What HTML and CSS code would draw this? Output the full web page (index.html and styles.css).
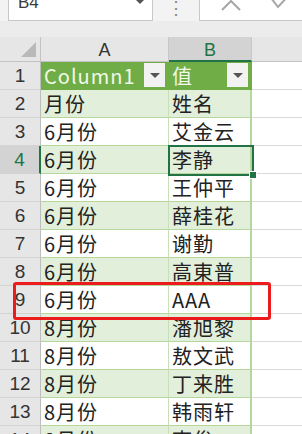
FILE: index.html
```html
<!DOCTYPE html>
<html lang="zh-CN">
<head>
    <meta charset="UTF-8">
    <title>Sheet</title>
    <link rel="stylesheet" href="styles.css">
</head>
<body>
    <!-- Name box and formula bar -->
    <div class="topbar">
        <div class="namebox">
            <span class="ref">B4</span>
            <svg class="drop" width="10" height="6" viewBox="0 0 10 6"><path d="M1 0 L5 4 L9 0" fill="#555"/></svg>
        </div>
        <div class="dots">⋮</div>
        <div class="formula">
            <svg class="fx-icon" width="22" height="12" viewBox="0 0 22 12"><path d="M2 10 L11 1 L20 10" stroke="#a6a6a6" stroke-width="2" fill="none"/></svg>
            <svg class="fx-icon" width="24" height="12" viewBox="0 0 24 12"><path d="M3 -2 L10 7 L22 -6" stroke="#a6a6a6" stroke-width="2" fill="none"/></svg>
        </div>
    </div>
    <div class="gap"></div>

    <!-- Grid -->
    <div class="sheet" id="sheet">
        <div class="corner"><span class="tri"></span></div>
        <div class="colhead">A</div>
        <div class="colhead sel">B</div>
        <div class="colhead last"></div>
    </div>

    <!-- overlays -->
    <div class="cursor"><span class="handle"></span></div>
    <div class="redbox"></div>

    <script>
        const rows = [
            ['月份', '姓名'],
            ['6月份', '艾金云'],
            ['6月份', '李静'],
            ['6月份', '王仲平'],
            ['6月份', '薛桂花'],
            ['6月份', '谢勤'],
            ['6月份', '高東普'],
            ['6月份', 'AAA'],
            ['8月份', '潘旭黎'],
            ['8月份', '敖文武'],
            ['8月份', '丁来胜'],
            ['8月份', '韩雨轩'],
            ['8月份', '李俊']
        ];
        const sheet = document.getElementById('sheet');
        let html = `
            <div class="rh">1</div>
            <div class="th">Column1<span class="filter"></span></div>
            <div class="th">值<span class="filter"></span></div>
            <div class="e"></div>`;
        rows.forEach((r, i) => {
            const n = i + 2;
            const band = n % 2 === 0 ? ' band' : '';
            html += `
                <div class="rh${n === 4 ? ' sel' : ''}">${n}</div>
                <div class="c${band}">${r[0]}</div>
                <div class="c b${band}">${r[1]}</div>
                <div class="e"></div>`;
        });
        sheet.insertAdjacentHTML('beforeend', html);
    </script>
</body>
</html>
```

FILE: styles.css
```css
/* Sheet view */
body {
    margin: 0;
    padding: 0;
    width: 302px;
    height: 434px;
    overflow: hidden;
    background-color: #f3f3f3;
    font-family: "Noto Sans CJK SC", "Liberation Sans", sans-serif;
    color: #222;
    position: relative;
}
.topbar {
    display: flex;
    height: 21px;
    background-color: #f3f3f3;
}
.namebox {
    width: 143px;
    margin-left: 8px;
    background-color: white;
    border: 1px solid #c8c8c8;
    border-top: none;
    display: flex;
    justify-content: space-between;
    overflow: hidden;
}
.ref {
    font-family: "Liberation Sans", sans-serif;
    font-size: 17px;
    color: #3a3a3a;
    margin-left: 9px;
    margin-top: -7px;
    line-height: 20px;
}
.drop {
    margin: 0 7px 0 0;
}
.dots {
    width: 46px;
    text-align: center;
    color: #8a8a8a;
    font-size: 18px;
    line-height: 14px;
    margin-top: -1px;
}
.formula {
    flex: 1;
    background-color: white;
    border: 1px solid #c8c8c8;
    border-top: none;
    border-right: none;
    display: flex;
    gap: 26px;
    padding-left: 20px;
    overflow: hidden;
}
.gap {
    height: 16px;
    background-color: #ececec;
}
.sheet {
    display: grid;
    grid-template-columns: 41px 128px 83px 1fr;
    grid-template-rows: 25px repeat(14, 28px);
    background-color: white;
    font-size: 20px;
    letter-spacing: 1px;
}
.corner {
    background-color: #e6e6e6;
    border-right: 1px solid #c3c3c3;
    border-bottom: 1px solid #c3c3c3;
    position: relative;
}
.tri {
    position: absolute;
    right: 4px;
    bottom: 4px;
    width: 0;
    height: 0;
    border-left: 15px solid transparent;
    border-bottom: 15px solid #b9b9b9;
}
.colhead {
    background-color: #e6e6e6;
    border-right: 1px solid #c8c8c8;
    border-bottom: 1px solid #c3c3c3;
    text-align: center;
    font-family: "Liberation Sans", sans-serif;
    font-size: 18px;
    line-height: 26px;
    color: #333;
    letter-spacing: 0;
}
.colhead.sel {
    background-color: #d3d3d3;
    border-bottom: 2px solid #217346;
    color: #217346;
}
.colhead.last {
    border-right: none;
}
.rh {
    background-color: #e6e6e6;
    border-right: 1px solid #bdbdbd;
    border-bottom: 1px solid #d3d3d3;
    text-align: center;
    font-family: "Liberation Sans", sans-serif;
    font-size: 19px;
    line-height: 28px;
    color: #333;
    letter-spacing: 0;
}
.rh.sel {
    background-color: #d3d3d3;
    border-right: 2px solid #217346;
    color: #217346;
}
.th {
    background-color: #70ad47;
    color: #f1f8e9;
    border-right: 1px solid #70ad47;
    padding-left: 3px;
    line-height: 27px;
    position: relative;
}
.filter {
    position: absolute;
    right: 3px;
    top: 1px;
    width: 21px;
    height: 24px;
    background-color: #f2f2f2;
}
.filter::after {
    content: "";
    position: absolute;
    left: 6px;
    top: 10px;
    border-left: 5px solid transparent;
    border-right: 5px solid transparent;
    border-top: 5px solid #555;
}
.c {
    border-right: 1px solid #c9dfb9;
    border-bottom: 1px solid #b5d69c;
    padding-left: 3px;
    line-height: 28px;
    background-color: white;
    white-space: nowrap;
    overflow: hidden;
}
.c.b {
    border-right: 2px solid #b5d69c;
}
.c.band {
    background-color: #e2efda;
}
.e {
    border-bottom: 1px solid #dadada;
    background-color: white;
}
.cursor {
    position: absolute;
    left: 168px;
    top: 145px;
    width: 82px;
    height: 27px;
    border: 2px solid #217346;
}
.handle {
    position: absolute;
    right: -5px;
    bottom: -5px;
    width: 6px;
    height: 6px;
    background-color: #217346;
    border: 1px solid white;
}
.redbox {
    position: absolute;
    left: 13px;
    top: 282px;
    width: 252px;
    height: 32px;
    border: 3px solid #ec1c1c;
    border-radius: 3px;
}
```
